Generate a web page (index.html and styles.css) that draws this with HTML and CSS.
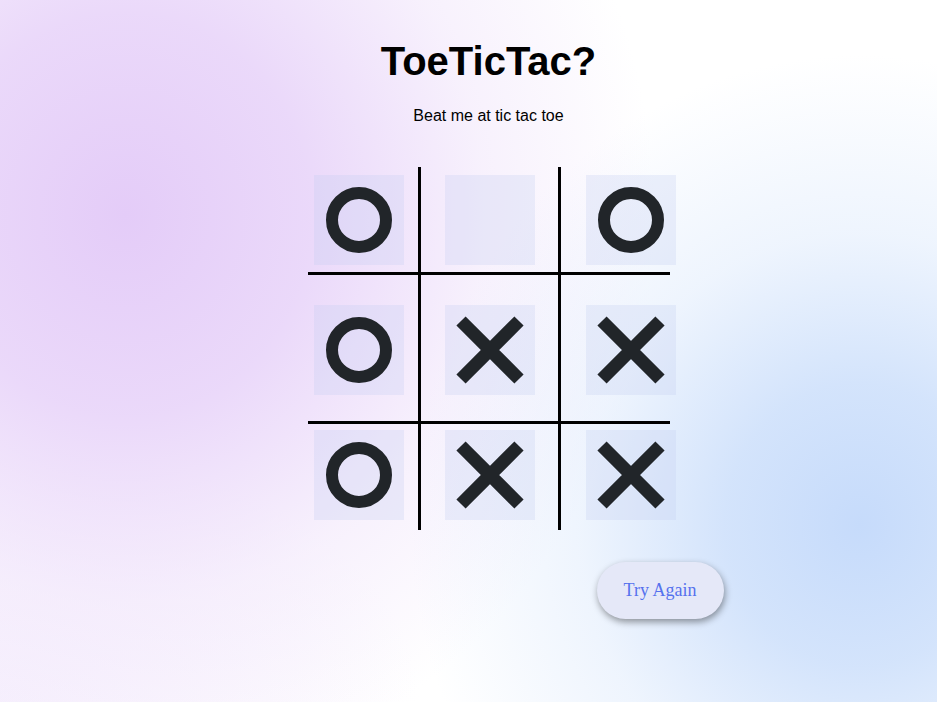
FILE: index.html
```html
<!DOCTYPE html>
<html lang="en">
<head>
<meta charset="utf-8">
<title>ToeTicTac?</title>
<link rel="stylesheet" href="styles.css">
</head>
<body>
<main class="page">
  <h1 class="title">ToeTicTac?</h1>
  <p class="subtitle">Beat me at tic tac toe</p>
  <div class="board">
    <div class="cell r1 c1"><svg viewBox="0 0 90 90"><circle class="o" cx="45" cy="45" r="27"/></svg></div>
    <div class="cell r1 c2"></div>
    <div class="cell r1 c3"><svg viewBox="0 0 90 90"><circle class="o" cx="45" cy="45" r="27"/></svg></div>
    <div class="cell r2 c1"><svg viewBox="0 0 90 90"><circle class="o" cx="45" cy="45" r="27"/></svg></div>
    <div class="cell r2 c2"><svg viewBox="0 0 90 90"><path class="x" d="M16 16L74 74M74 16L16 74"/></svg></div>
    <div class="cell r2 c3"><svg viewBox="0 0 90 90"><path class="x" d="M16 16L74 74M74 16L16 74"/></svg></div>
    <div class="cell r3 c1"><svg viewBox="0 0 90 90"><circle class="o" cx="45" cy="45" r="27"/></svg></div>
    <div class="cell r3 c2"><svg viewBox="0 0 90 90"><path class="x" d="M16 16L74 74M74 16L16 74"/></svg></div>
    <div class="cell r3 c3"><svg viewBox="0 0 90 90"><path class="x" d="M16 16L74 74M74 16L16 74"/></svg></div>
    <div class="vline v1"></div>
    <div class="vline v2"></div>
    <div class="hline h1"></div>
    <div class="hline h2"></div>
  </div>
  <div class="actions">
    <button class="btn" type="button">Try Again</button>
  </div>
</main>
</body>
</html>
```

FILE: styles.css
```css
html, body {
  margin: 0;
  height: 100%;
}

body {
  min-height: 702px;
  overflow: hidden;
  font-family: "Liberation Sans", Arial, sans-serif;
  color: #000;
  background-color: #ffffff;
  background-image:
    radial-gradient(ellipse 450px 470px at 860px 525px, rgba(198, 219, 251, 1) 0%, rgba(204, 223, 251, 0.85) 30%, rgba(218, 232, 252, 0.45) 62%, rgba(232, 241, 253, 0) 100%),
    radial-gradient(ellipse 530px 570px at 125px 215px, rgba(228, 204, 248, 1) 0%, rgba(231, 210, 249, 0.85) 35%, rgba(238, 224, 250, 0.45) 68%, rgba(245, 238, 252, 0) 100%),
    radial-gradient(ellipse 420px 260px at 0px 702px, rgba(245, 238, 253, 0.8) 0%, rgba(246, 239, 253, 0) 100%);
}

.page {
  box-sizing: border-box;
  width: 937px;
  padding: 38px 0 0 40px;
  display: flex;
  flex-direction: column;
  align-items: center;
}

.title {
  margin: 0;
  font-size: 40px;
  line-height: 46px;
  font-weight: bold;
}

.subtitle {
  margin: 23px 0 0;
  font-size: 16px;
  line-height: 18px;
}

.board {
  margin-top: 42px;
  display: grid;
  grid-template-columns: 110px 3px 137px 3px 109px;
  grid-template-rows: 105px 3px 146px 3px 106px;
}

.cell {
  width: 90px;
  height: 90px;
  background: rgba(195, 205, 240, 0.28);
  justify-self: start;
  align-self: start;
}

.cell svg {
  display: block;
  width: 90px;
  height: 90px;
}

.o {
  fill: none;
  stroke: #212529;
  stroke-width: 12;
}

.x {
  fill: none;
  stroke: #212529;
  stroke-width: 13;
}

.r1 { grid-row: 1; margin-top: 8px; }
.r2 { grid-row: 3; margin-top: 30px; }
.r3 { grid-row: 5; margin-top: 6px; }
.c1 { grid-column: 1; margin-left: 6px; }
.c2 { grid-column: 3; margin-left: 24px; }
.c3 { grid-column: 5; margin-left: 25px; }

.vline {
  grid-row: 1 / -1;
  background: #000;
}
.v1 { grid-column: 2; }
.v2 { grid-column: 4; }

.hline {
  grid-column: 1 / -1;
  background: #000;
}
.h1 { grid-row: 2; }
.h2 { grid-row: 4; }

.actions {
  width: 362px;
  margin-top: 32px;
  display: flex;
}

.btn {
  flex-shrink: 0;
  margin-left: 289px;
  width: 127px;
  height: 57px;
  border: none;
  border-radius: 29px;
  background: #e5e8f8;
  box-shadow: 1px 3px 7px rgba(0, 0, 0, 0.4);
  font-family: "Liberation Serif", "Times New Roman", serif;
  font-size: 18px;
  color: #5572ee;
  padding: 0;
}
```
